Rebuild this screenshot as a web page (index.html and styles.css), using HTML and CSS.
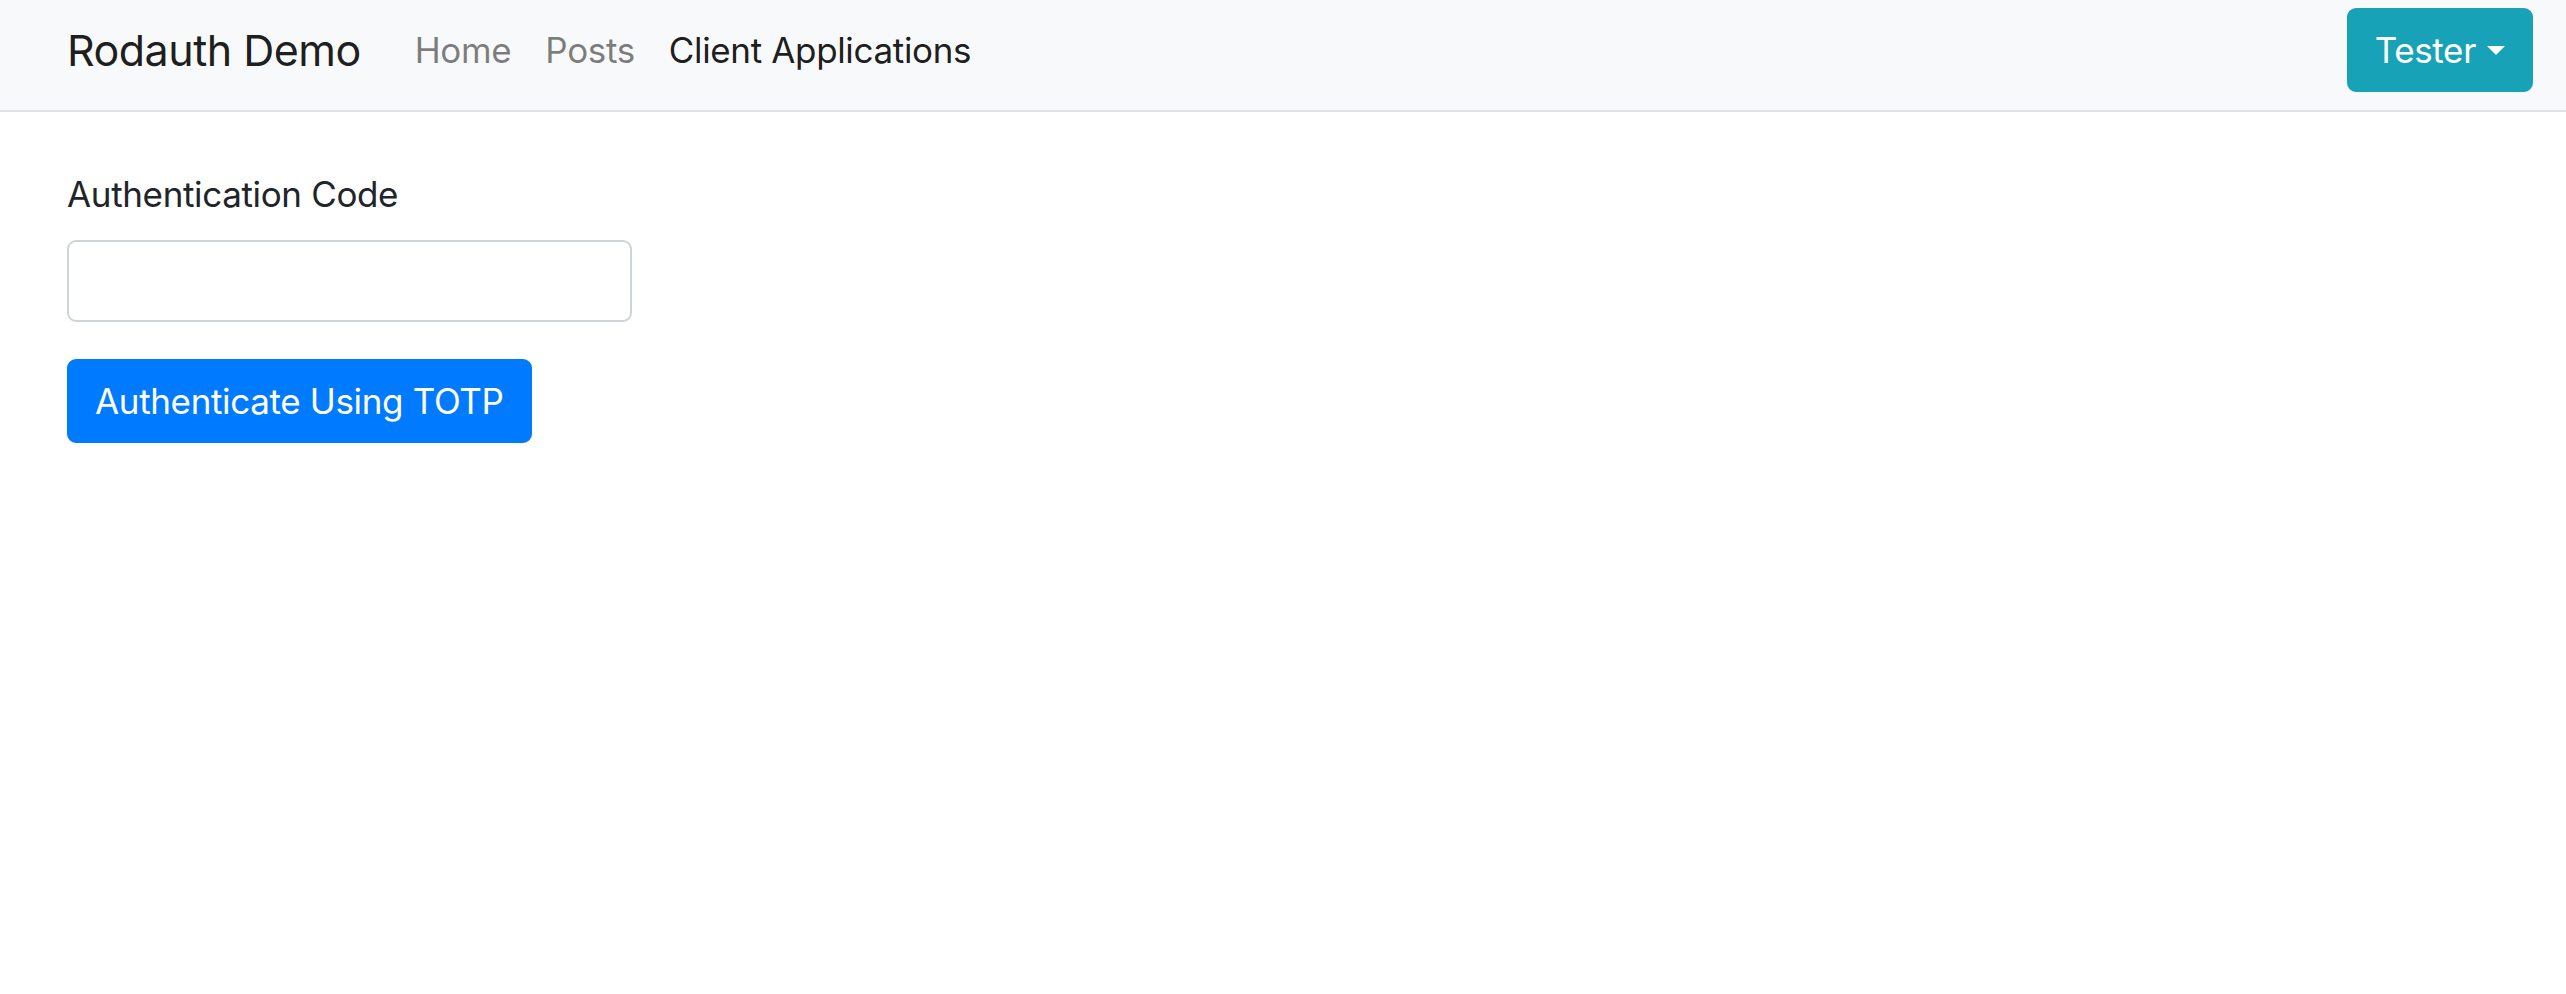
FILE: index.html
```html
<!DOCTYPE html>
<html lang="en">
<head>
    <meta charset="UTF-8">
    <meta name="viewport" content="width=device-width, initial-scale=1.0">
    <title>Rodauth Demo</title>
    <link rel="stylesheet" href="styles.css">
</head>
<body>
    <!-- Top navigation -->
    <nav class="navbar">
        <a class="brand" href="#">Rodauth Demo</a>
        <ul class="nav-links">
            <li><a class="nav-link" href="#">Home</a></li>
            <li><a class="nav-link" href="#">Posts</a></li>
            <li><a class="nav-link active" href="#">Client Applications</a></li>
        </ul>
        <button class="btn btn-info dropdown-toggle" type="button">Tester</button>
    </nav>

    <!-- OTP form -->
    <main class="content">
        <form class="otp-form">
            <div class="form-group">
                <label for="otp-auth-code">Authentication Code</label>
                <input type="text" id="otp-auth-code" class="form-control" autocomplete="off">
            </div>
            <button type="submit" class="btn btn-primary">Authenticate Using TOTP</button>
        </form>
    </main>
</body>
</html>
```

FILE: styles.css
```css
body {
    margin: 0;
    font-family: Inter, "Noto Sans", sans-serif;
    font-size: 35px;
    line-height: 1.5;
    letter-spacing: -0.01em;
    color: #212529;
    background-color: #fff;
}
a {
    text-decoration: none;
}
/* Navbar */
.navbar {
    display: flex;
    align-items: center;
    height: 112px;
    box-sizing: border-box;
    padding: 9px 33px 19px 67px;
    background-color: #f8f9fa;
    border-bottom: 2px solid #dee2e6;
}
.brand {
    font-size: 43px;
    line-height: 66px;
    letter-spacing: -0.012em;
    color: rgba(0, 0, 0, 0.9);
    margin-right: 37px;
}
.nav-links {
    display: flex;
    list-style: none;
    margin: 0;
    padding: 0;
    flex: 1;
}
.nav-link {
    display: block;
    padding: 0 17px;
    color: rgba(0, 0, 0, 0.5);
}
.nav-link.active {
    color: rgba(0, 0, 0, 0.9);
}
/* Buttons */
.btn {
    font-family: inherit;
    font-size: 35px;
    line-height: 1.5;
    letter-spacing: inherit;
    padding: 14px 26px;
    border: 2px solid transparent;
    border-radius: 9px;
    color: #fff;
    cursor: pointer;
}
.btn-info {
    background-color: #17a2b8;
    border-color: #17a2b8;
}
.btn-primary {
    background-color: #007bff;
    border-color: #007bff;
}
.dropdown-toggle::after {
    content: "";
    display: inline-block;
    margin-left: 11px;
    vertical-align: 8px;
    border-top: 9px solid;
    border-left: 9px solid transparent;
    border-right: 9px solid transparent;
}
/* Form */
.content {
    padding: 56px 67px;
}
.form-group {
    margin-bottom: 37px;
}
label {
    display: block;
    margin-bottom: 19px;
}
.form-control {
    display: block;
    box-sizing: border-box;
    width: 565px;
    height: 82px;
    padding: 13px 26px;
    font-family: inherit;
    font-size: 35px;
    color: #495057;
    border: 2px solid #ced4da;
    border-radius: 9px;
}
```
